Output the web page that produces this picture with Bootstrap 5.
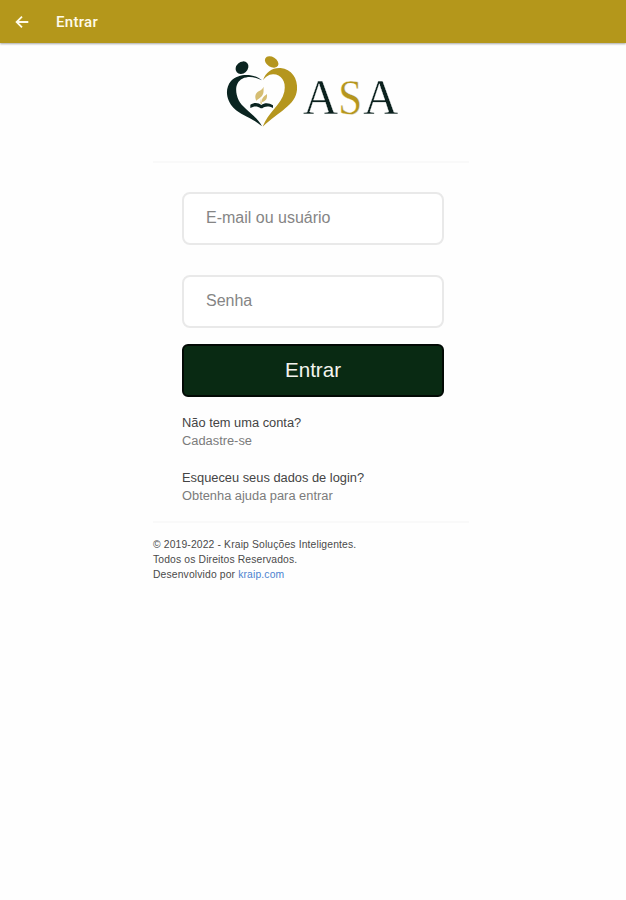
<!DOCTYPE html>
<html lang="pt-BR">
<head>
<meta charset="utf-8">
<meta name="viewport" content="width=device-width, initial-scale=1">
<title>Entrar</title>
<link href="https://cdn.jsdelivr.net/npm/bootstrap@5.3.0/dist/css/bootstrap.min.css" rel="stylesheet">
<style>
body{font-family:"Liberation Sans",Arial,sans-serif;background:#fefefe;color:#444}
.app-bar{height:43px;background:#b4971b;color:#fffbea;padding-left:14px;box-shadow:0 1px 2px rgba(0,0,0,.35)}
.app-title{font:500 15px/20px Roboto,sans-serif;letter-spacing:.3px;margin-left:26px}
.login-wrap{width:316px;margin-left:153px;padding-top:7px}
.logo{margin-left:67px;width:180px;height:80px}
.rule{height:2px;background:#f9f9f9}
.rule-top{margin-top:31px}
.login-form{width:262px;margin-left:29px;padding-top:29px}
.field{height:53px;border:2px solid #e9e9e9;border-radius:8px;padding:0 22px 1px;font-size:16px;background:#fff}
.field + .field{margin-top:30px}
.field::placeholder{color:#858585}
.btn-enter{height:53px;background:#092a13;border:2px solid #020a05;border-radius:6px;color:#f4f4ee;font-size:20.6px;padding:0}
.btn-enter:hover{background:#0d3a1b;color:#fff}
.help{font-size:12.85px;line-height:18.3px;margin-top:17px}
.help a{color:#7b7b7b}
.foot{font-size:10.35px;letter-spacing:.14px;line-height:15px;margin-top:14px;color:#4a4a4a}
.foot a{color:#4c82d0}
</style>
</head>
<body>
<header class="app-bar d-flex align-items-center">
  <a href="#" class="d-flex text-reset" aria-label="Voltar">
    <svg width="16" height="16" viewBox="0 0 16 16" fill="none" stroke="currentColor" stroke-width="1.8"><path d="M14.3 8H2.8M8 2.6 2.6 8 8 13.4"/></svg>
  </a>
  <span class="app-title">Entrar</span>
</header>
<main class="login-wrap">
  <svg class="logo d-block" viewBox="0 0 180 80" role="img" aria-label="ASA">
    <g transform="scale(.3333)">
      <g fill="#0a2420">
        <ellipse cx="66" cy="53" rx="21" ry="17" transform="rotate(-42 66 53)"/>
        <path d="M126 91C102 70 57 68 33 93C13 117 19 151 41 174C64 197 96 202 126 229C110 197 68 176 56 151C43 122 47 96 67 86C87 77 109 82 126 91Z"/>
        <path d="M91 164C103 156 116 158 124 165C134 157 148 158 159 166L159 174C145 167 134 169 127 175H122C112 167 101 168 91 174Z"/>
      </g>
      <g fill="#b5961e">
        <ellipse cx="155" cy="36" rx="22" ry="15" transform="rotate(31 155 36)"/>
        <path d="M129 91C137 65 159 52 182 54C214 57 234 85 231 119C227 166 176 184 128 230C144 187 184 164 193 125C200 92 181 72 159 73C144 74 137 81 129 91Z"/>
      </g>
      <g fill="#d5bd72">
        <path d="M131 110C130 120 133 128 126 138C121 144 114 147 109 152C103 141 106 130 116 124C123 120 128 117 131 110Z"/>
        <path d="M141 132C142 146 139 151 127 157C123 145 131 140 141 132Z"/>
        <path d="M123 144L126 163L121 160Z"/>
      </g>
    </g>
    <g font-family="'Liberation Serif',serif" font-size="50" fill="#0b211e" stroke="#fefefe" stroke-width=".3">
      <text x="83" y="64" textLength="35" lengthAdjust="spacingAndGlyphs">A</text>
      <text x="118.2" y="64" textLength="24" lengthAdjust="spacingAndGlyphs" fill="#b5961e">S</text>
      <text x="143.2" y="64" textLength="35" lengthAdjust="spacingAndGlyphs">A</text>
    </g>
  </svg>
  <div class="rule rule-top"></div>
  <form class="login-form">
    <input class="form-control field" type="text" placeholder="E-mail ou usuário" aria-label="E-mail ou usuário">
    <input class="form-control field" type="password" placeholder="Senha" aria-label="Senha">
    <button class="btn btn-enter w-100 mt-3 d-block" type="button">Entrar</button>
    <div class="help">
      Não tem uma conta?<br><a href="#" class="text-decoration-none">Cadastre-se</a><br><br>
      Esqueceu seus dados de login?<br><a href="#" class="text-decoration-none">Obtenha ajuda para entrar</a>
    </div>
  </form>
  <div class="rule mt-3"></div>
  <footer class="foot">© 2019-2022 - Kraip Soluções Inteligentes.<br>Todos os Direitos Reservados.<br>Desenvolvido por <a href="#" class="text-decoration-none">kraip.com</a></footer>
</main>
<script src="https://cdn.jsdelivr.net/npm/bootstrap@5.3.0/dist/js/bootstrap.bundle.min.js"></script>
</body>
</html>
